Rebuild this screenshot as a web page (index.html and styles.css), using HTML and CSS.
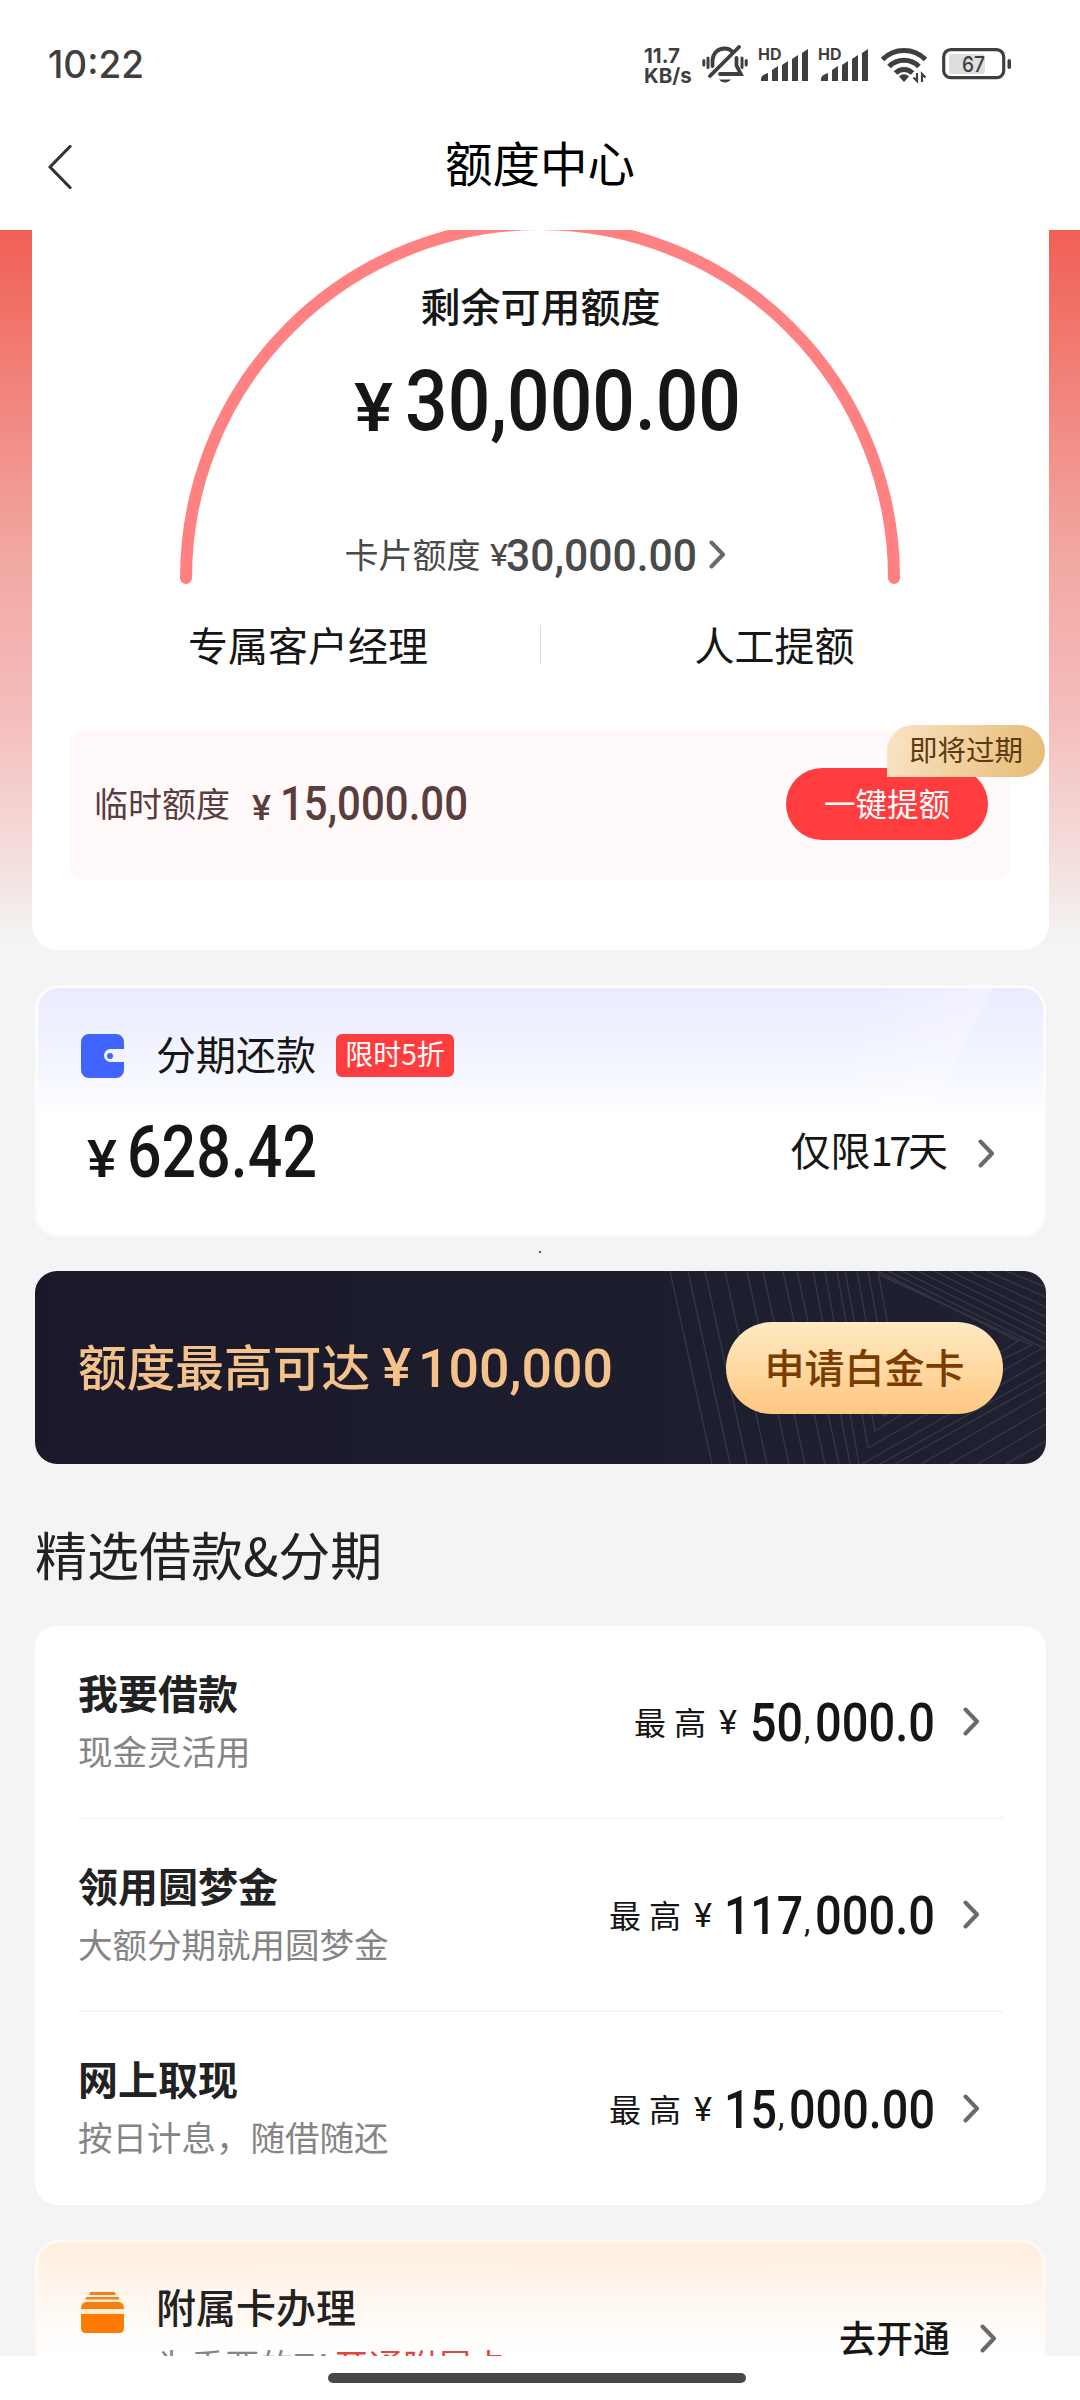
FILE: index.html
```html
<!DOCTYPE html>
<html lang="zh-CN">
<head>
<meta charset="utf-8">
<title>额度中心</title>
<link rel="stylesheet" href="styles.css">
</head>
<body>
<div class="screen">
  <header class="top">
    <div class="status">
      <svg class="num clock" width="92" height="28"><text x="-2" y="28" textLength="96" lengthAdjust="spacingAndGlyphs">10:22</text></svg>
      <div class="status-icons">
        <div class="speed"><span>11.7</span><span>KB/s</span></div>
        <svg class="bell" width="46" height="40" viewBox="0 0 46 40" fill="none" stroke="#3f3f3f" stroke-width="3.8" stroke-linecap="round">
          <path d="M10.500 21V15.500C11 8 16 3.500 22.500 3.500c4 0 6.500 1.500 8 3.500M34.500 13v7.500l4.300 8.500H18"/>
          <path d="M37 2 8 31" />
          <path d="M17 34.500h12c-3 4-9 4-12 0z" fill="#3f3f3f" stroke="none"/>
          <path d="M1.800 15.500v4.500M6 13v9.500M40 13v9.500M44.200 15.500v4.500" stroke-width="3"/>
        </svg>
        <svg class="signal" width="50" height="34" viewBox="0 0 50 34"><text x="-1" y="12" class="hd">HD</text><path d="M2 31q0-4 7-6v8H2zM13 22l6-4v15h-6zM23 17l6-4v20h-6zM33 11l6-4v26h-6zM43 5l6-4v32h-6z"/></svg>
        <svg class="signal second" width="50" height="34" viewBox="0 0 50 34"><text x="-1" y="12" class="hd">HD</text><path d="M2 31q0-4 7-6v8H2zM13 22l6-4v15h-6zM23 17l6-4v20h-6zM33 11l6-4v26h-6zM43 5l6-4v32h-6z"/></svg>
        <svg class="wifi" width="46" height="36" viewBox="0 0 46 36" fill="none" stroke="#3f3f3f" stroke-width="5">
          <path d="M1.500 12.500a30 30 0 0 1 43 0M8 19.500a21 21 0 0 1 30 0M14.500 26a12 12 0 0 1 17 0"/>
          <path d="M18 29.500q5-4.500 10 0L23 35z" fill="#3f3f3f" stroke="none"/>
          <path d="M36 26v8l-3.500-3.500M41 35v-8l3.500 3.500" stroke-width="2.200"/>
        </svg>
        <svg class="battery" width="70" height="32" viewBox="0 0 70 32">
          <rect x="7" y="6" width="36" height="20" rx="3" fill="#dedede"/>
          <rect x="1.700" y="1.700" width="60" height="28" rx="7" fill="none" stroke="#3f3f3f" stroke-width="3.200"/>
          <rect x="65.500" y="11" width="3.500" height="10" rx="1.700" fill="#3f3f3f"/>
          <text x="20" y="24" textLength="23" lengthAdjust="spacingAndGlyphs">67</text>
        </svg>
      </div>
    </div>
    <nav class="nav">
      <svg class="back" width="24" height="44" viewBox="0 0 24 44"><path d="M22 1.500 2 22l20 20.500"/></svg>
      <h1>额度中心</h1>
    </nav>
  </header>

  <main class="content">
    <section class="hero">
      <div class="quota">
        <svg class="arc" width="722" height="356" viewBox="0 0 722 356"><path d="M7 347a354 354 0 0 1 708 0"/></svg>
        <div class="quota-label">剩余可用额度</div>
        <div class="quota-sum">
          <svg class="num yen" width="37" height="48"><text x="-1" y="48" textLength="39" lengthAdjust="spacingAndGlyphs">¥</text></svg>
          <svg class="num big" width="330" height="63"><text x="-3" y="62" textLength="336" lengthAdjust="spacingAndGlyphs">30,000.00</text></svg>
        </div>
        <div class="card-quota">
          <span>卡片额度</span>
          <svg class="num yen" width="18" height="23"><text x="0" y="23" textLength="18" lengthAdjust="spacingAndGlyphs">¥</text></svg>
          <svg class="num mid" width="187" height="33"><text x="-2" y="33" textLength="191" lengthAdjust="spacingAndGlyphs">30,000.00</text></svg>
          <svg class="chev" width="17" height="29" viewBox="0 0 17 29"><path d="M2.500 2.500 14 14.500 2.500 26.500"/></svg>
        </div>
      </div>
      <div class="links"><span>专属客户经理</span><i></i><span>人工提额</span></div>
      <div class="temp">
        <span class="temp-label">临时额度</span>
        <svg class="num yen" width="19" height="25"><text x="0" y="25" textLength="19" lengthAdjust="spacingAndGlyphs">¥</text></svg>
        <svg class="num mid" width="183" height="35"><text x="-3" y="34" textLength="188" lengthAdjust="spacingAndGlyphs">15,000.00</text></svg>
        <button class="raise">一键提额</button>
        <em class="badge">即将过期</em>
      </div>
    </section>

    <section class="install">
      <div class="install-head">
        <svg width="43" height="44" viewBox="0 0 43 44"><path fill="#4164ff" d="M8 0h27a8 8 0 0 1 8 8v7H29.500a6.500 6.500 0 0 0 0 13H43v8a8 8 0 0 1-8 8H8a8 8 0 0 1-8-8V8a8 8 0 0 1 8-8z"/><circle cx="29" cy="22" r="3" fill="#4164ff"/></svg>
        <span class="name">分期还款</span>
        <span class="tag">限时5折</span>
      </div>
      <div class="install-body">
        <svg class="num yen" width="28" height="37"><text x="-1" y="37" textLength="30" lengthAdjust="spacingAndGlyphs">¥</text></svg>
        <svg class="num sum" width="186" height="52"><text x="-2" y="52" textLength="190" lengthAdjust="spacingAndGlyphs">628.42</text></svg>
        <span class="remain">仅限<span class="days">17</span>天</span>
        <svg class="chev" width="17" height="29" viewBox="0 0 17 29"><path d="M2.500 2.500 14 14.500 2.500 26.500"/></svg>
      </div>
    </section>

    <div class="speck"></div>

    <section class="banner">
      <svg class="lines" width="406" height="193" viewBox="0 0 406 193">
        <path d="M30 0 72 193M48 0l42 193M65 0l42 193M85 0l42 193M107 0l42 193M123 0l42 193M143 0l42 193M157 0l42 193M173 0l37 193M185 0l34 193M197 0l31 177L406 75M205 0l30 160L378 70 238 0M217 0l26 145M228 0l24 130M238 0l20 110"/>
        <path d="M243 145 392 74 238 3M222 193 406 88M240 193 406 100M255 193 406 109M281 193 406 121M310 193 406 137M338 193 406 153M366 193 406 170M248 0 406 78M262 0 406 71M278 0 406 63M294 0 406 55M310 0 406 46M328 0 406 36M346 0 406 26M366 0 406 16"/>
      </svg>
      <div class="banner-text">额度最高可达</div>
      <svg class="num yen" width="27" height="39"><text x="-1" y="38" textLength="29" lengthAdjust="spacingAndGlyphs">¥</text></svg>
      <svg class="num gold" width="190" height="39"><text x="-4" y="38.500" textLength="195" lengthAdjust="spacingAndGlyphs">100,000</text></svg>
      <button class="apply">申请白金卡</button>
    </section>

    <h2>精选借款&amp;分期</h2>

    <section class="list">
      <div class="row">
        <div class="desc"><b>我要借款</b><small>现金灵活用</small></div>
        <span class="upto">最高</span>
        <svg class="num yen" width="18" height="24"><text x="0" y="24" textLength="18" lengthAdjust="spacingAndGlyphs">¥</text></svg>
        <svg class="num sum" width="181" height="39"><text x="-2" y="39" textLength="53" lengthAdjust="spacingAndGlyphs">50</text><text x="52" y="37" class="comma">,</text><text x="63" y="39" textLength="120" lengthAdjust="spacingAndGlyphs">000.0</text></svg>
        <svg class="chev" width="17" height="29" viewBox="0 0 17 29"><path d="M2.500 2.500 14 14.500 2.500 26.500"/></svg>
      </div>
      <div class="row">
        <div class="desc"><b>领用圆梦金</b><small>大额分期就用圆梦金</small></div>
        <span class="upto">最高</span>
        <svg class="num yen" width="18" height="24"><text x="0" y="24" textLength="18" lengthAdjust="spacingAndGlyphs">¥</text></svg>
        <svg class="num sum" width="206" height="39"><text x="-3" y="39" textLength="79" lengthAdjust="spacingAndGlyphs">117</text><text x="77" y="37" class="comma">,</text><text x="88" y="39" textLength="120" lengthAdjust="spacingAndGlyphs">000.0</text></svg>
        <svg class="chev" width="17" height="29" viewBox="0 0 17 29"><path d="M2.500 2.500 14 14.500 2.500 26.500"/></svg>
      </div>
      <div class="row">
        <div class="desc"><b>网上取现</b><small>按日计息，随借随还</small></div>
        <span class="upto">最高</span>
        <svg class="num yen" width="18" height="24"><text x="0" y="24" textLength="18" lengthAdjust="spacingAndGlyphs">¥</text></svg>
        <svg class="num sum" width="206" height="39"><text x="-3" y="39" textLength="53" lengthAdjust="spacingAndGlyphs">15</text><text x="51" y="37" class="comma">,</text><text x="62" y="39" textLength="146" lengthAdjust="spacingAndGlyphs">000.00</text></svg>
        <svg class="chev" width="17" height="29" viewBox="0 0 17 29"><path d="M2.500 2.500 14 14.500 2.500 26.500"/></svg>
      </div>
    </section>

    <section class="extra">
      <svg class="cards" width="43" height="43" viewBox="0 0 43 43"><path fill="#fdeccd" d="M9 0h25l9 12v14H0V12z"/><path fill="#e8822b" d="M9.500 1h24l1.500 3H8zM5.500 6h32l1 2.500h-34z"/><path fill="#f58012" d="M5 11h33q5 1 5 7H0q0-6 5-7z"/><path fill="#ff7a00" d="M0 23h43v14q0 5-5 5H5q-5 0-5-5z"/></svg>
      <div class="desc"><b>附属卡办理</b><small>为重要的TA<span class="red">开通附属卡</span></small></div>
      <span class="open">去开通</span>
      <svg class="chev" width="17" height="29" viewBox="0 0 17 29"><path d="M2.500 2.500 14 14.500 2.500 26.500"/></svg>
    </section>
  </main>

  <footer class="home"><i></i></footer>
</div>
</body>
</html>
```
FILE: styles.css
```css
* { box-sizing: border-box; }
body {
  margin: 0;
  font-family: "Noto Sans CJK SC", "Noto Sans", sans-serif;
  color: #161616;
  background: #fff;
}
.screen { width: 1080px; height: 2400px; display: flex; flex-direction: column; overflow: hidden; }
svg { display: block; flex: none; }
b, em, i { font-style: normal; }
button { border: 0; padding: 0; font-family: inherit; white-space: nowrap; }

.num { overflow: visible; font-family: Roboto, sans-serif; font-weight: 500; fill: currentColor; }
.chev path { fill: none; stroke: #6a6a6a; stroke-width: 4; stroke-linecap: round; stroke-linejoin: round; }

/* status bar and title */
.top { height: 230px; flex: none; background: #fff; }
.status { height: 104px; padding: 41px 68px 0 50px; display: flex; justify-content: space-between; }
.clock { margin-top: 9px; font-family: Inter, sans-serif; font-size: 38px; font-weight: 500; color: #3f3f3f; }
.status-icons { display: flex; align-items: flex-start; color: #3f3f3f; }
.speed { width: 48px; padding-top: 5px; font: 700 20.5px/20px Inter, sans-serif; display: flex; flex-direction: column; }
.bell { margin: 4px 0 0 10px; }
.signal { margin: 7px 0 0 11px; fill: #3f3f3f; overflow: visible; }
.signal.second { margin-left: 10px; }
.hd { font: 700 16px Inter, sans-serif; }
.wifi { margin: 6px 0 0 12px; }
.battery { margin: 7px 0 0 15px; fill: #3f3f3f; font: 500 22px Inter, sans-serif; }
.nav { height: 126px; position: relative; display: flex; justify-content: center; }
.back { position: absolute; left: 48px; top: 41px; fill: none; stroke: #333; stroke-width: 3.2; stroke-linecap: round; stroke-linejoin: round; }
h1 { margin: 28px 0 0; font-size: 47.5px; line-height: 60px; font-weight: 400; color: #000; }

/* scrolling content */
.content {
  flex: 1;
  min-height: 0;
  overflow: hidden;
  background: linear-gradient(#f15f56 0, #f1847b 160px, #f2a8a3 330px, #f4bcba 480px, #f4dcdb 620px, #f4f4f4 715px) #f4f4f4;
}
.hero {
  height: 720px;
  margin: 0 31px 0 32px;
  border-radius: 0 0 26px 26px;
  background: #fff;
}
.quota { position: relative; padding-top: 51px; display: flex; flex-direction: column; align-items: center; }
.arc { position: absolute; left: 147px; top: 1px; overflow: visible; fill: none; stroke: #ff8181; stroke-width: 12; stroke-linecap: round; }
.quota-label { font-size: 40px; line-height: 48px; font-weight: 500; }
.quota-sum { height: 63px; margin-top: 39px; padding-left: 11px; display: flex; align-items: flex-end; gap: 16px; }
.quota-sum .yen { font-size: 67px; }
.big { font-size: 86px; }
.card-quota { height: 48px; margin-top: 99px; padding-right: 11px; display: flex; align-items: center; color: #4a4a4a; font-size: 34px; line-height: 46px; }
.card-quota .yen { margin-left: 9px; font-size: 32px; font-weight: 400; }
.card-quota .mid { font-size: 45px; }
.card-quota .chev { margin-left: 14px; }
.links { height: 48px; margin-top: 42px; display: grid; grid-template-columns: 1fr 1px 1fr; align-items: center; text-align: center; font-size: 40px; line-height: 48px; }
.links span:first-child { text-align: left; margin-left: 156px; }
.links span:last-child { padding-right: 41px; }
.links i { height: 39px; background: #dcdcdc; }
.temp { position: relative; height: 150px; margin: 62px 39px 0 38px; padding: 0 22px 3px 24px; border-radius: 12px; background: #fff9f9; color: #5a3d3d; display: flex; align-items: center; }
.temp-label { font-size: 34px; line-height: 40px; padding-bottom: 2px; }
.temp .yen { margin: 8px 0 0 22px; font-size: 35px; }
.temp .mid { margin-left: 12px; font-size: 48px; }
.raise { width: 202px; height: 72px; margin-left: auto; padding-bottom: 4px; border-radius: 36px; background: #ff3d3f; color: #fff; font-size: 31.5px; line-height: 66px; }
.badge { position: absolute; right: -35px; top: -5px; width: 158px; height: 52px; border-radius: 26px 26px 26px 0; background: linear-gradient(100deg, #f9e4c5, #e6bb74); color: #5f3a0f; font-size: 28.500px; line-height: 48px; text-align: center; }

/* instalment card */
.install { height: 252px; margin: 35px 34px 0 35px; padding: 46px 49px 0 43px; border: 3px solid #fcfcff; border-radius: 24px; background: linear-gradient(118deg, transparent 74%, rgba(255,255,255,.3) 84%, transparent 84.200%), linear-gradient(#ebebff, #f4f6ff 80px, #fff 128px); }
.install-head { height: 43px; display: flex; align-items: center; }
.install-head .name { margin-left: 32px; font-size: 40px; line-height: 43px; margin-top: -5px; }
.tag { width: 118px; height: 43px; margin-left: 20px; border-radius: 6px; background: #ff3d3f; color: #fff; font-size: 28px; line-height: 39px; text-align: center; }
.install-body { height: 52px; margin: 48px 0 0 7px; display: flex; align-items: flex-end; }
.install-body .yen { font-size: 52px; }
.install-body .sum { margin-left: 13px; font-size: 73px; }
.remain { margin-left: auto; font-size: 40px; line-height: 52px; padding-bottom: 2px; }
.days { letter-spacing: -3.5px; }
.install-body .chev { margin: 0 -1px 9px 30px; }

.speck { height: 34px; padding: 14px 0 0 539px; }
.speck::before { content: ""; display: block; width: 2px; height: 2px; background: #555; }

/* platinum banner */
.banner { position: relative; height: 193px; margin: 0 34px 0 35px; padding: 0 43px; border-radius: 22px; overflow: hidden; background: linear-gradient(90deg, #19192a, #1f2030); color: #f5c28c; display: flex; align-items: center; }
.lines { position: absolute; right: 0; top: 0; fill: none; stroke: #353645; stroke-width: 1.400; }
.banner-text { font-size: 48.700px; line-height: 60px; font-weight: 500; padding-bottom: 6px; }
.banner .yen { margin-left: 13px; font-size: 53px; }
.gold { margin-left: 12px; font-size: 54px; }
.apply { position: relative; width: 277px; height: 92px; margin-left: auto; padding-bottom: 4px; border-radius: 46px; background: linear-gradient(#ffeac4, #ffc780); color: #7a3c00; font-size: 40px; line-height: 82px; font-weight: 500; }

h2 { margin: 60px 0 43px 35px; font-size: 52px; line-height: 60px; font-weight: 400; color: #222; }

/* loan list */
.list { height: 579px; margin: 0 34px 0 35px; padding: 0 43px; border-radius: 22px; background: #fff; }
.row { height: 193px; padding-right: 23px; display: flex; align-items: center; border-bottom: 2px solid #f6f6f6; }
.row:first-child { margin-top: -1px; }
.row:last-child { border-bottom: 0; }
.desc { flex: 1; align-self: flex-start; padding-top: 42px; display: flex; flex-direction: column; white-space: nowrap; }
.desc b { font-size: 40px; line-height: 48px; font-weight: 700; color: #222; }
.desc small { margin-top: 14px; font-size: 34.500px; line-height: 40px; color: #858585; }
.upto { font-size: 32px; letter-spacing: 8px; line-height: 40px; padding-bottom: 2px; }
.row .yen { margin-left: 5px; font-size: 33px; font-weight: 400; }
.row .sum { margin-left: 15px; font-size: 54px; }
.row .sum .comma { font-size: 32px; font-weight: 400; }
.row .chev { margin-left: 30px; }

/* supplementary card */
.extra { height: 200px; margin: 35px 34px 0 35px; padding: 0 46px 0 43px; border: 3px solid #fff9f2; border-radius: 24px; background: linear-gradient(#ffeedd, #fff6ee 50px, #fff 110px); display: flex; align-items: flex-start; }
.cards { margin-top: 48px; }
.extra .desc { margin-left: 32px; padding-top: 39px; }
.extra .desc b { font-weight: 500; }
.extra .red { color: #e0453f; }
.open { margin-top: 70px; font-size: 37px; line-height: 48px; font-weight: 500; }
.extra .chev { margin: 81px 0 0 30px; }

.home { height: 44px; flex: none; background: #fff; display: flex; padding: 17px 0 0 328px; }
.home i { width: 418px; height: 10px; border-radius: 5px; background: #484848; }
```
